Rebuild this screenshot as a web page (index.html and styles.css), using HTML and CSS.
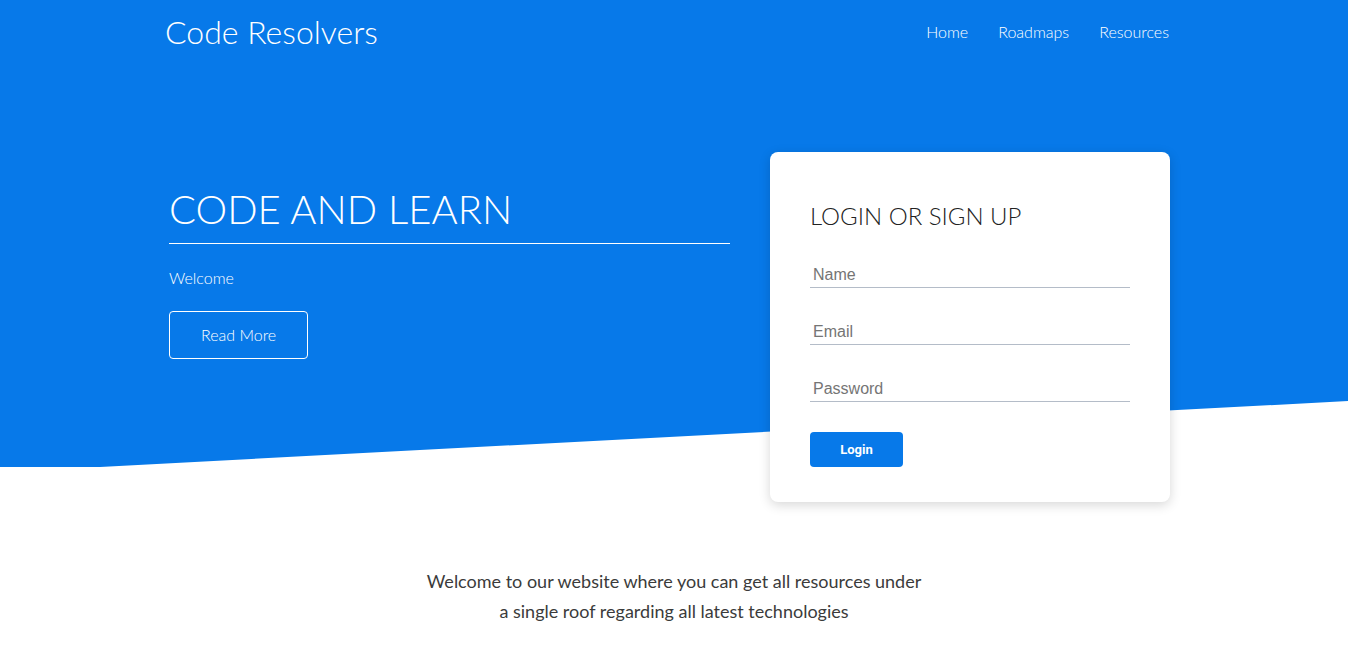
FILE: index.html
```html
<!DOCTYPE html>
<html lang="en">
<head>
<meta charset="utf-8">
<title>Code Resolvers</title>
<link rel="stylesheet" href="styles.css">
</head>
<body>
<div class="top">
  <header class="container navbar">
    <a class="logo" href="#">Code Resolvers</a>
    <nav class="nav">
      <a href="#">Home</a>
      <a href="#">Roadmaps</a>
      <a href="#">Resources</a>
    </nav>
  </header>
  <section class="container hero">
    <div class="hero-text">
      <h1 class="hero-title">CODE AND LEARN</h1>
      <p class="hero-sub">Welcome</p>
      <a class="btn-outline" href="#">Read More</a>
    </div>
    <form class="card">
      <h2 class="card-title">LOGIN OR SIGN UP</h2>
      <input class="field" type="text" placeholder="Name">
      <input class="field" type="email" placeholder="Email">
      <input class="field" type="password" placeholder="Password">
      <button class="btn-login" type="button">Login</button>
    </form>
  </section>
</div>
<section class="about">
  <p>Welcome to our website where you can get all resources under<br>a single roof regarding all latest technologies</p>
</section>
</body>
</html>
```
FILE: styles.css
```css
* { box-sizing: border-box; }
body {
  margin: 0;
  font-family: Lato, "Open Sans", Arial, sans-serif;
  color: #333;
  background: #fff;
}
.top {
  position: relative;
}
.top::before {
  content: "";
  position: absolute;
  left: 0;
  right: 0;
  top: 0;
  height: 467px;
  background: #0779e9;
  clip-path: polygon(0 0, 100% 0, 100% 401px, 100px 467px, 0 467px);
  z-index: 0;
}
.container {
  position: relative;
  z-index: 1;
  width: 1005px;
  margin-left: calc(50% - 509px);
}
.navbar {
  height: 64px;
  display: flex;
  align-items: center;
  justify-content: space-between;
}
.logo {
  color: #fff;
  text-decoration: none;
  font-size: 32px;
  font-weight: 300;
  line-height: 1;
}
.nav {
  display: flex;
  gap: 30px;
  margin: 0 1px 2px 0;
}
.nav a {
  color: #fff;
  text-decoration: none;
  font-size: 16px;
  font-weight: 300;
}
.hero {
  display: grid;
  grid-template-columns: 561px 400px;
  column-gap: 40px;
  padding-left: 4px;
  align-items: start;
}
.hero-text {
  padding-top: 121px;
  color: #fff;
}
.hero-title {
  margin: 0;
  font-size: 40px;
  font-weight: 300;
  line-height: 48px;
  padding-bottom: 10px;
  border-bottom: 1px solid #fff;
}
.hero-sub {
  margin: 22px 0 0;
  font-size: 16px;
  font-weight: 300;
  line-height: 24px;
}
.btn-outline {
  display: inline-block;
  margin-top: 21px;
  padding: 11px 31px;
  border: 1px solid #fff;
  border-radius: 4px;
  color: #fff;
  text-decoration: none;
  font-size: 16px;
  font-weight: 300;
  line-height: 24px;
}
.card {
  margin: 88px 0 0;
  background: #fff;
  border-radius: 8px;
  box-shadow: 0 3px 12px rgba(0, 0, 0, 0.16);
  padding: 49px 40px 35px;
  display: flex;
  flex-direction: column;
  align-items: flex-start;
}
.card-title {
  margin: 0 0 30px;
  font-size: 24px;
  font-weight: 300;
  line-height: 29px;
  color: #222;
}
.field {
  display: block;
  width: 100%;
  height: 28px;
  margin: 0 0 29px;
  padding: 6px 3px 3px;
  border: none;
  border-bottom: 1px solid #b4bcc8;
  outline: none;
  font-family: "Liberation Sans", Arial, sans-serif;
  font-size: 16px;
  line-height: 18px;
  color: #333;
  background: transparent;
}
.field:last-of-type { margin-bottom: 30px; }
.field::placeholder { color: #757575; }
.btn-login {
  width: 93px;
  height: 35px;
  border: none;
  border-radius: 4px;
  background: #0779e9;
  color: #fff;
  font-family: Roboto, "Liberation Sans", Arial, sans-serif;
  font-weight: 700;
  font-size: 13px;
  cursor: pointer;
}
.about {
  padding-top: 64px;
  text-align: center;
}
.about p {
  margin: 0;
  font-size: 18px;
  line-height: 30px;
  color: #3b3b3b;
}
```
